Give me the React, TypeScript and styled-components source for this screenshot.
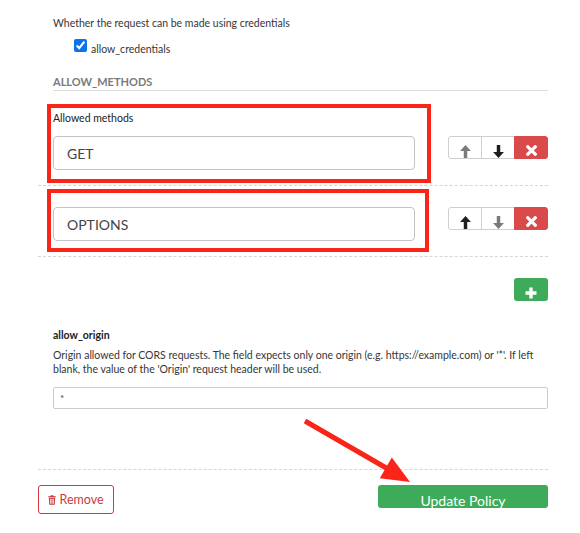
import React from "react";
import styled, { createGlobalStyle } from "styled-components";

const GlobalStyle = createGlobalStyle`
  html, body { margin: 0; padding: 0; background: #fff; }
  body {
    font-family: Lato, "Liberation Sans", sans-serif;
    font-size: 10px;
    color: #333;
  }
  * { box-sizing: border-box; }
`;

const Page = styled.div`
  position: relative;
  width: 580px;
  height: 533px;
  overflow: hidden;
  padding: 0 32px 0 38px;
`;

const Indented = styled.div`
  padding-left: 15px;
`;

const HelpText = styled.div<{ $top?: number }>`
  margin-top: ${(p) => p.$top ?? 0}px;
  line-height: 14px;
  font-size: 10.5px;
  color: #363636;
`;

const CheckRow = styled.label`
  display: flex;
  align-items: flex-start;
  margin-top: 9px;
  margin-left: 21px;
  gap: 4px;
  color: #363636;
  font-size: 10.5px;
`;

const CheckBox = styled.input`
  width: 13px;
  height: 13px;
  margin: 0;
  accent-color: #0a74ea;
`;

const CheckLabel = styled.span`
  margin-top: 3px;
  line-height: 14px;
`;

const SectionTitle = styled.div`
  margin-top: 19px;
  line-height: 14px;
  padding-bottom: 1px;
  border-bottom: 1px solid #ddd;
  font-size: 11px;
  font-weight: 700;
  color: #7a7a7a;
`;

const MethodRow = styled.div<{ $pt: number; $pb: number }>`
  display: flex;
  align-items: flex-start;
  padding: ${(p) => p.$pt}px 0 ${(p) => p.$pb}px 0;
  border-bottom: 1px dashed #d6d6d6;
`;

const Highlight = styled.div<{ $w: number; $pt: number; $pb: number }>`
  width: ${(p) => p.$w}px;
  margin-left: 9px;
  border: 4px solid #fb2419;
  padding: ${(p) => p.$pt}px 0 ${(p) => p.$pb}px 2px;
`;

const FieldLabel = styled.div`
  line-height: 14px;
  font-size: 10.5px;
  color: #222;
  margin-bottom: 11px;
`;

const MethodInput = styled.input`
  display: block;
  width: 362px;
  height: 34px;
  border: 1px solid #c4c4c4;
  border-radius: 4px;
  padding: 0 13px;
  font-family: Lato, "Liberation Sans", sans-serif;
  font-size: 14px;
  color: #444;
  background: #fff;
  outline: none;
`;

const BtnGroup = styled.div<{ $top: number }>`
  display: flex;
  margin-left: auto;
  margin-top: ${(p) => p.$top}px;
`;

const IconBtn = styled.button<{ $variant: "plain" | "danger" }>`
  width: 34px;
  height: 23px;
  margin: 0;
  padding: 8px 0 0 0;
  display: flex;
  justify-content: center;
  align-items: flex-start;
  border: 1px solid ${(p) => (p.$variant === "danger" ? "#da4a4a" : "#cfcfcf")};
  background: ${(p) => (p.$variant === "danger" ? "#da4a4a" : "#fff")};
  & + & { margin-left: -1px; }
  &:first-child { border-radius: 3px 0 0 3px; }
  &:last-child { border-radius: 0 3px 3px 0; }
`;

const AddRow = styled.div`
  display: flex;
  justify-content: flex-end;
  margin-top: 21px;
`;

const AddBtn = styled.button`
  width: 34px;
  height: 23px;
  margin: 0;
  padding: 9px 0 0 0;
  display: flex;
  justify-content: center;
  align-items: flex-start;
  border: none;
  border-radius: 3px;
  background: #3dab59;
`;

const OriginLabel = styled.div`
  margin-top: 27px;
  line-height: 14px;
  font-size: 10.5px;
  font-weight: 700;
  color: #222;
`;

const OriginInput = styled.input`
  display: block;
  width: 495px;
  height: 22px;
  margin-top: 11px;
  border: 1px solid #cccccc;
  border-radius: 2px;
  padding: 0 6px;
  font-family: Lato, "Liberation Sans", sans-serif;
  font-size: 10px;
  color: #444;
  outline: none;
`;

const Footer = styled.div`
  margin-top: 60px;
  border-top: 1px dashed #d6d6d6;
  padding-top: 15px;
  display: flex;
  justify-content: space-between;
  align-items: flex-start;
`;

const RemoveBtn = styled.button`
  width: 76px;
  height: 29px;
  margin: 0;
  display: flex;
  align-items: center;
  justify-content: center;
  gap: 3px;
  padding: 0;
  background: #fff;
  border: 1px solid #d0393c;
  border-radius: 3px;
  color: #cc3a3d;
  font-family: Lato, "Liberation Sans", sans-serif;
  font-size: 12.5px;
`;

const UpdateBtn = styled.button`
  width: 170px;
  height: 23px;
  margin: 0;
  padding: 9px 0 0 0;
  overflow: hidden;
  border: none;
  border-radius: 3px;
  background: #3dab59;
  color: #fff;
  font-family: Lato, "Liberation Sans", sans-serif;
  font-size: 14px;
  line-height: 14px;
  text-align: center;
`;

const ArrowOverlay = styled.svg`
  position: absolute;
  left: 0;
  top: 0;
  pointer-events: none;
`;

const ArrowIcon = ({ dir, color }: { dir: "up" | "down"; color: string }) => (
  <svg width="11" height="13" viewBox="0 0 10 12" style={{ transform: dir === "down" ? "rotate(180deg)" : undefined }}>
    <path d="M5 0 L10 5.6 L6.6 5.6 L6.6 12 L3.4 12 L3.4 5.6 L0 5.6 Z" fill={color} />
  </svg>
);

const CloseIcon = () => (
  <svg width="11" height="11" viewBox="0 0 11 11">
    <path d="M1.8 1.8 L9.2 9.2 M9.2 1.8 L1.8 9.2" stroke="#fff" strokeWidth="3.2" strokeLinecap="square" />
  </svg>
);

const PlusIcon = () => (
  <svg width="12" height="12" viewBox="0 0 12 12">
    <path d="M6 0.5 V11.5 M0.5 6 H11.5" stroke="#fff" strokeWidth="3.4" />
  </svg>
);

const TrashIcon = () => (
  <svg width="8" height="10" viewBox="0 0 8 10">
    <path d="M2.8 0.3 H5.2 L5.6 1.2 H7.8 V2.3 H0.2 V1.2 H2.4 Z" fill="#cc3a3d" />
    <path d="M0.8 2.8 H7.2 L6.7 9.8 H1.3 Z M2.3 3.8 V8.8 H3.1 V3.8 Z M3.6 3.8 V8.8 H4.4 V3.8 Z M4.9 3.8 V8.8 H5.7 V3.8 Z" fill="#cc3a3d" fillRule="evenodd" />
  </svg>
);

type Method = { value: string; label?: string; upOn: boolean; downOn: boolean };

const methods: Method[] = [
  { value: "GET", label: "Allowed methods", upOn: false, downOn: true },
  { value: "OPTIONS", upOn: true, downOn: false },
];

const Controls = ({ m, top }: { m: Method; top: number }) => (
  <BtnGroup $top={top}>
    <IconBtn $variant="plain" type="button">
      <ArrowIcon dir="up" color={m.upOn ? "#1e1e1e" : "#7a7a7a"} />
    </IconBtn>
    <IconBtn $variant="plain" type="button">
      <ArrowIcon dir="down" color={m.downOn ? "#1e1e1e" : "#7a7a7a"} />
    </IconBtn>
    <IconBtn $variant="danger" type="button">
      <CloseIcon />
    </IconBtn>
  </BtnGroup>
);

export default function App() {
  return (
    <Page>
      <GlobalStyle />
      <Indented>
        <HelpText $top={16}>Whether the request can be made using credentials</HelpText>
        <CheckRow>
          <CheckBox type="checkbox" defaultChecked />
          <CheckLabel>allow_credentials</CheckLabel>
        </CheckRow>
        <SectionTitle>ALLOW_METHODS</SectionTitle>
      </Indented>

      <MethodRow $pt={13} $pb={2}>
        <Highlight $w={384} $pt={3} $pb={9}>
          <FieldLabel>{methods[0].label}</FieldLabel>
          <MethodInput defaultValue={methods[0].value} />
        </Highlight>
        <Controls m={methods[0]} top={32} />
      </MethodRow>

      <MethodRow $pt={3} $pb={4}>
        <Highlight $w={382} $pt={14} $pb={7}>
          <MethodInput defaultValue={methods[1].value} />
        </Highlight>
        <Controls m={methods[1]} top={18} />
      </MethodRow>

      <AddRow>
        <AddBtn type="button">
          <PlusIcon />
        </AddBtn>
      </AddRow>

      <Indented>
        <OriginLabel>allow_origin</OriginLabel>
        <HelpText $top={6}>
          Origin allowed for CORS requests. The field expects only one origin (e.g. https://example.com) or '*'. If left
          blank, the value of the 'Origin' request header will be used.
        </HelpText>
        <OriginInput defaultValue="*" />
      </Indented>

      <Footer>
        <RemoveBtn type="button">
          <TrashIcon />
          Remove
        </RemoveBtn>
        <UpdateBtn type="button">Update Policy</UpdateBtn>
      </Footer>

      <ArrowOverlay width="580" height="533" viewBox="0 0 580 533">
        <line x1="305" y1="421" x2="388" y2="469" stroke="#fb2419" strokeWidth="5" />
        <polygon points="410,482 379.8,478.3 391.8,457.5" fill="#fb2419" />
      </ArrowOverlay>
    </Page>
  );
}
